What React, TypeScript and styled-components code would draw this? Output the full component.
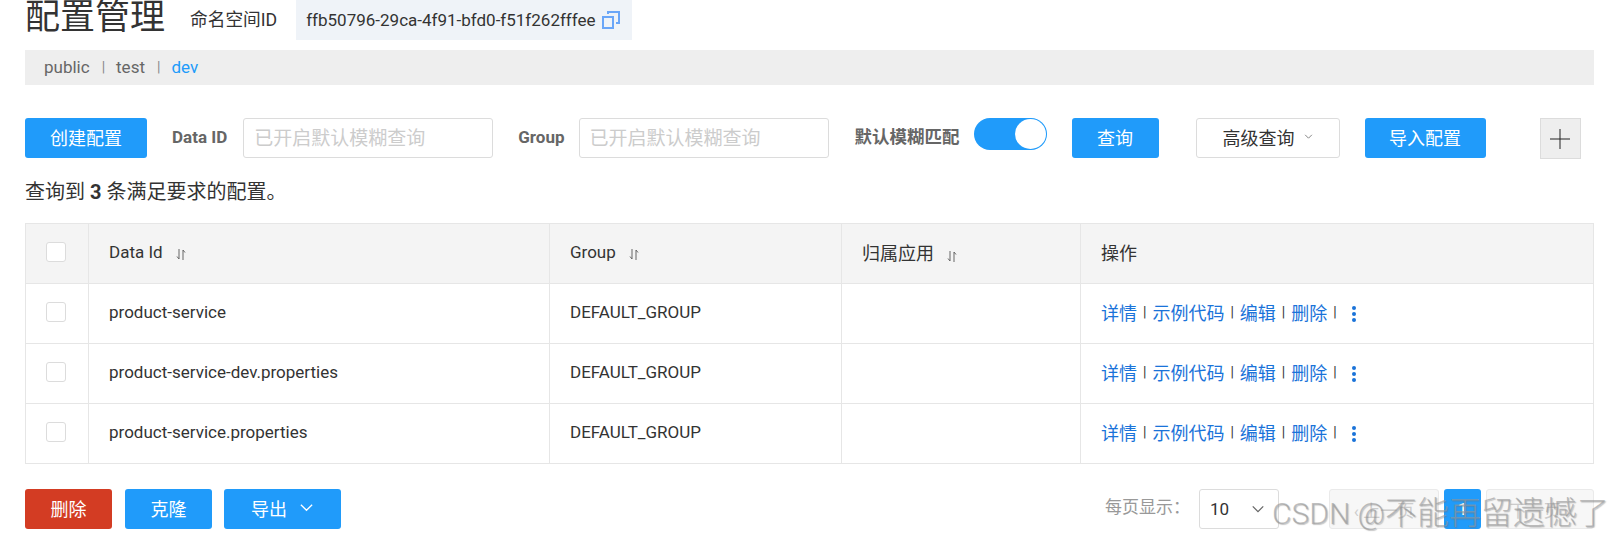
import styled, { createGlobalStyle } from "styled-components";

const GlobalStyle = createGlobalStyle`
  body {
    margin: 0;
    background: #fff;
    font-family: Roboto, "Noto Sans CJK SC", sans-serif;
    color: #333;
  }
`;

const Page = styled.div`
  position: relative;
  width: 1616px;
  height: 541px;
  overflow: hidden;
  padding: 0 22px 0 25px;
  box-sizing: border-box;
`;

const Header = styled.div`
  display: flex;
  align-items: flex-start;
  height: 50px;
`;

const Title = styled.h1`
  margin: 0;
  font-size: 35px;
  font-weight: 400;
  line-height: 35px;
  color: #333;
`;

const NamespaceLabel = styled.span`
  margin: 0 19px 0 25px;
  font-size: 17.7px;
  line-height: 40px;
`;

const NamespaceId = styled.div`
  display: flex;
  align-items: center;
  gap: 6px;
  width: 336px;
  height: 40px;
  padding-left: 10px;
  box-sizing: border-box;
  background: #eff3f8;
  font-size: 17px;
`;

const NamespaceBar = styled.div`
  display: flex;
  align-items: center;
  height: 35px;
  padding: 0 0 1px 19px;
  box-sizing: border-box;
  background: #eee;
  font-size: 17px;
  color: #666;
`;

const NamespaceItem = styled.span<{ $active?: boolean }>`
  color: ${(p) => (p.$active ? "#209bfa" : "#666")};
`;

const NamespaceDivider = styled.span`
  margin: 0 11px 0 12px;
  font-size: 14px;
  color: #888;
`;

const Toolbar = styled.div`
  display: flex;
  align-items: flex-start;
  height: 40px;
  margin-top: 33px;
`;

const Button = styled.button<{ $width: number; $left?: number; $color?: string }>`
  display: inline-flex;
  align-items: center;
  justify-content: center;
  gap: 12px;
  flex-shrink: 0;
  width: ${(p) => p.$width}px;
  height: 40px;
  margin: 0 0 0 ${(p) => p.$left ?? 0}px;
  padding: 0 0 3px;
  border: 0;
  border-radius: 3px;
  background: ${(p) => p.$color ?? "#209bfa"};
  color: #fff;
  font-family: inherit;
  font-size: 18px;
`;

const OutlineButton = styled(Button)`
  gap: 9px;
  border: 1px solid #dcdcdc;
  background: #fff;
  color: #333;
`;

const FieldLabel = styled.label<{ $left: number; $size?: number }>`
  margin-left: ${(p) => p.$left}px;
  font-size: ${(p) => p.$size ?? 17}px;
  font-weight: 700;
  line-height: 38px;
  color: #666;
  white-space: nowrap;
`;

const SearchInput = styled.input<{ $left: number }>`
  flex-shrink: 0;
  width: 250px;
  height: 40px;
  margin-left: ${(p) => p.$left}px;
  padding: 0 10px;
  box-sizing: border-box;
  border: 1px solid #dcdcdc;
  border-radius: 3px;
  outline: none;
  font-family: inherit;
  font-size: 19px;

  &::placeholder {
    color: #ccc;
  }
`;

const Switch = styled.div`
  display: flex;
  justify-content: flex-end;
  align-items: center;
  flex-shrink: 0;
  width: 73px;
  height: 32px;
  margin-left: 14px;
  padding-right: 1px;
  box-sizing: border-box;
  border-radius: 16px;
  background: #209bfa;
`;

const SwitchKnob = styled.span`
  width: 31px;
  height: 30px;
  border-radius: 50%;
  background: #fff;
`;

const PlusButton = styled.div`
  display: flex;
  align-items: center;
  justify-content: center;
  flex-shrink: 0;
  width: 41px;
  height: 41px;
  margin-left: 54px;
  box-sizing: border-box;
  border: 1px solid #dcdcdc;
  background: #eee;
`;

const ResultText = styled.div`
  margin-top: 20px;
  font-size: 20px;
  line-height: 28px;
  color: #333;

  strong {
    font-weight: 700;
  }
`;

const Table = styled.table`
  width: 1569px;
  margin-top: 17px;
  border-collapse: collapse;
  table-layout: fixed;
  font-size: 17px;

  th,
  td {
    height: 60px;
    padding: 0 20px 3px;
    box-sizing: border-box;
    border: 1px solid #e6e6e6;
    text-align: left;
    font-weight: 400;
    color: #333;
  }

  th {
    background: #f4f4f4;
  }
`;

const CjkText = styled.span`
  font-size: 18px;
`;

const Checkbox = styled.span`
  display: block;
  width: 20px;
  height: 20px;
  box-sizing: border-box;
  border: 1px solid #dcdcdc;
  border-radius: 3px;
  background: #fff;
`;

const SortIcon = styled.svg`
  margin-left: 13px;
  vertical-align: -3px;
`;

const Actions = styled.div`
  display: flex;
  align-items: center;
  color: #333;
`;

const ActionLink = styled.a`
  font-size: 18px;
  color: #1a73d9;
`;

const ActionDivider = styled.span`
  margin: 0 6px;
  font-size: 14px;
`;

const MoreDots = styled.svg`
  margin: 3px 0 0 8px;
`;

const Footer = styled.div`
  display: flex;
  align-items: flex-start;
  margin-top: 25px;
`;

const PageSize = styled.span`
  margin-left: auto;
  font-size: 17px;
  line-height: 36px;
  color: #999;
`;

const PageSelect = styled.div`
  display: flex;
  align-items: center;
  justify-content: space-between;
  width: 80px;
  height: 40px;
  margin: 0 50px 0 9px;
  padding: 0 13px 0 10px;
  box-sizing: border-box;
  border: 1px solid #dcdcdc;
  border-radius: 3px;
  font-size: 17px;
`;

const PagerButton = styled.div<{ $width: number }>`
  display: flex;
  align-items: center;
  justify-content: center;
  width: ${(p) => p.$width}px;
  height: 40px;
  box-sizing: border-box;
  border: 1px solid #eaeaea;
  border-radius: 3px;
  background: #f7f7f7;
  font-size: 17px;
  color: #ccc;
`;

const CurrentPage = styled(PagerButton)`
  margin: 0 5px;
  border: 0;
  background: #209bfa;
  color: #fff;
`;

const Watermark = styled.div`
  position: absolute;
  left: 1272px;
  top: 493px;
  font-size: 32px;
  font-weight: 300;
  line-height: 40px;
  white-space: nowrap;
  color: rgba(150, 150, 150, 0.6);
  text-shadow: 1px 1px 1px rgba(110, 110, 110, 0.4);
`;

const WatermarkLatin = styled.span`
  font-size: 30px;
`;

const Chevron = ({ size, color }: { size: number; color: string }) => (
  <svg width={size} height={size} viewBox="0 0 16 16" fill="none" stroke={color} strokeWidth="1.4">
    <path d="M2 5l6 6 6-6" />
  </svg>
);

const Sort = () => (
  <SortIcon width="10" height="13" viewBox="0 0 10 13" fill="none" stroke="#666" strokeWidth="1">
    <path d="M3 1v10M3 11L1 8.5M7 12V2M7 2l2 2.5" />
  </SortIcon>
);

const Dots = () => (
  <MoreDots width="6" height="18" viewBox="0 0 6 18" fill="#1a73d9">
    <circle cx="3" cy="3" r="2" />
    <circle cx="3" cy="9" r="2" />
    <circle cx="3" cy="15" r="2" />
  </MoreDots>
);

const rows = ["product-service", "product-service-dev.properties", "product-service.properties"];

const App = () => {
  return (
    <Page>
      <GlobalStyle />
      <Header>
        <Title>配置管理</Title>
        <NamespaceLabel>命名空间ID</NamespaceLabel>
        <NamespaceId>
          ffb50796-29ca-4f91-bfd0-f51f262fffee
          <svg width="18" height="18" viewBox="0 0 18 18" fill="none" stroke="#6aa6f8" strokeWidth="2">
            <path d="M1 6h10v11H1zM6 3V1h11v11h-3" />
          </svg>
        </NamespaceId>
      </Header>
      <NamespaceBar>
        <NamespaceItem>public</NamespaceItem>
        <NamespaceDivider>|</NamespaceDivider>
        <NamespaceItem>test</NamespaceItem>
        <NamespaceDivider>|</NamespaceDivider>
        <NamespaceItem $active>dev</NamespaceItem>
      </NamespaceBar>
      <Toolbar>
        <Button $width={122}>创建配置</Button>
        <FieldLabel $left={25}>Data ID</FieldLabel>
        <SearchInput $left={16} placeholder="已开启默认模糊查询" />
        <FieldLabel $left={25}>Group</FieldLabel>
        <SearchInput $left={14} placeholder="已开启默认模糊查询" />
        <FieldLabel $left={26} $size={17.5}>默认模糊匹配</FieldLabel>
        <Switch>
          <SwitchKnob />
        </Switch>
        <Button $width={87} $left={25}>查询</Button>
        <OutlineButton $width={144} $left={37}>
          高级查询
          <Chevron size={9} color="#666" />
        </OutlineButton>
        <Button $width={121} $left={25}>导入配置</Button>
        <PlusButton>
          <svg width="20" height="20" viewBox="0 0 20 20" stroke="#222" strokeWidth="1">
            <path d="M10 0v20M0 10h20" />
          </svg>
        </PlusButton>
      </Toolbar>
      <ResultText>
        查询到 <strong>3</strong> 条满足要求的配置。
      </ResultText>
      <Table>
        <colgroup>
          <col width="63" />
          <col width="461" />
          <col width="292" />
          <col width="239" />
          <col />
        </colgroup>
        <thead>
          <tr>
            <th>
              <Checkbox />
            </th>
            <th>
              Data Id
              <Sort />
            </th>
            <th>
              Group
              <Sort />
            </th>
            <th>
              <CjkText>归属应用</CjkText>
              <Sort />
            </th>
            <th>
              <CjkText>操作</CjkText>
            </th>
          </tr>
        </thead>
        <tbody>
          {rows.map((name) => (
            <tr key={name}>
              <td>
                <Checkbox />
              </td>
              <td>{name}</td>
              <td>DEFAULT_GROUP</td>
              <td />
              <td>
                <Actions>
                  <ActionLink>详情</ActionLink>
                  <ActionDivider>|</ActionDivider>
                  <ActionLink>示例代码</ActionLink>
                  <ActionDivider>|</ActionDivider>
                  <ActionLink>编辑</ActionLink>
                  <ActionDivider>|</ActionDivider>
                  <ActionLink>删除</ActionLink>
                  <ActionDivider>|</ActionDivider>
                  <Dots />
                </Actions>
              </td>
            </tr>
          ))}
        </tbody>
      </Table>
      <Footer>
        <Button $width={87} $color="#d33c23">删除</Button>
        <Button $width={87} $left={13}>克隆</Button>
        <Button $width={117} $left={12}>
          导出
          <Chevron size={15} color="#fff" />
        </Button>
        <PageSize>每页显示：</PageSize>
        <PageSelect>
          10
          <Chevron size={14} color="#666" />
        </PageSelect>
        <PagerButton $width={110}>‹ 上一页</PagerButton>
        <CurrentPage $width={37}>1</CurrentPage>
        <PagerButton $width={108}>下一页 ›</PagerButton>
      </Footer>
      <Watermark>
        <WatermarkLatin>CSDN @</WatermarkLatin>不能再留遗憾了
      </Watermark>
    </Page>
  );
};

export default App;
